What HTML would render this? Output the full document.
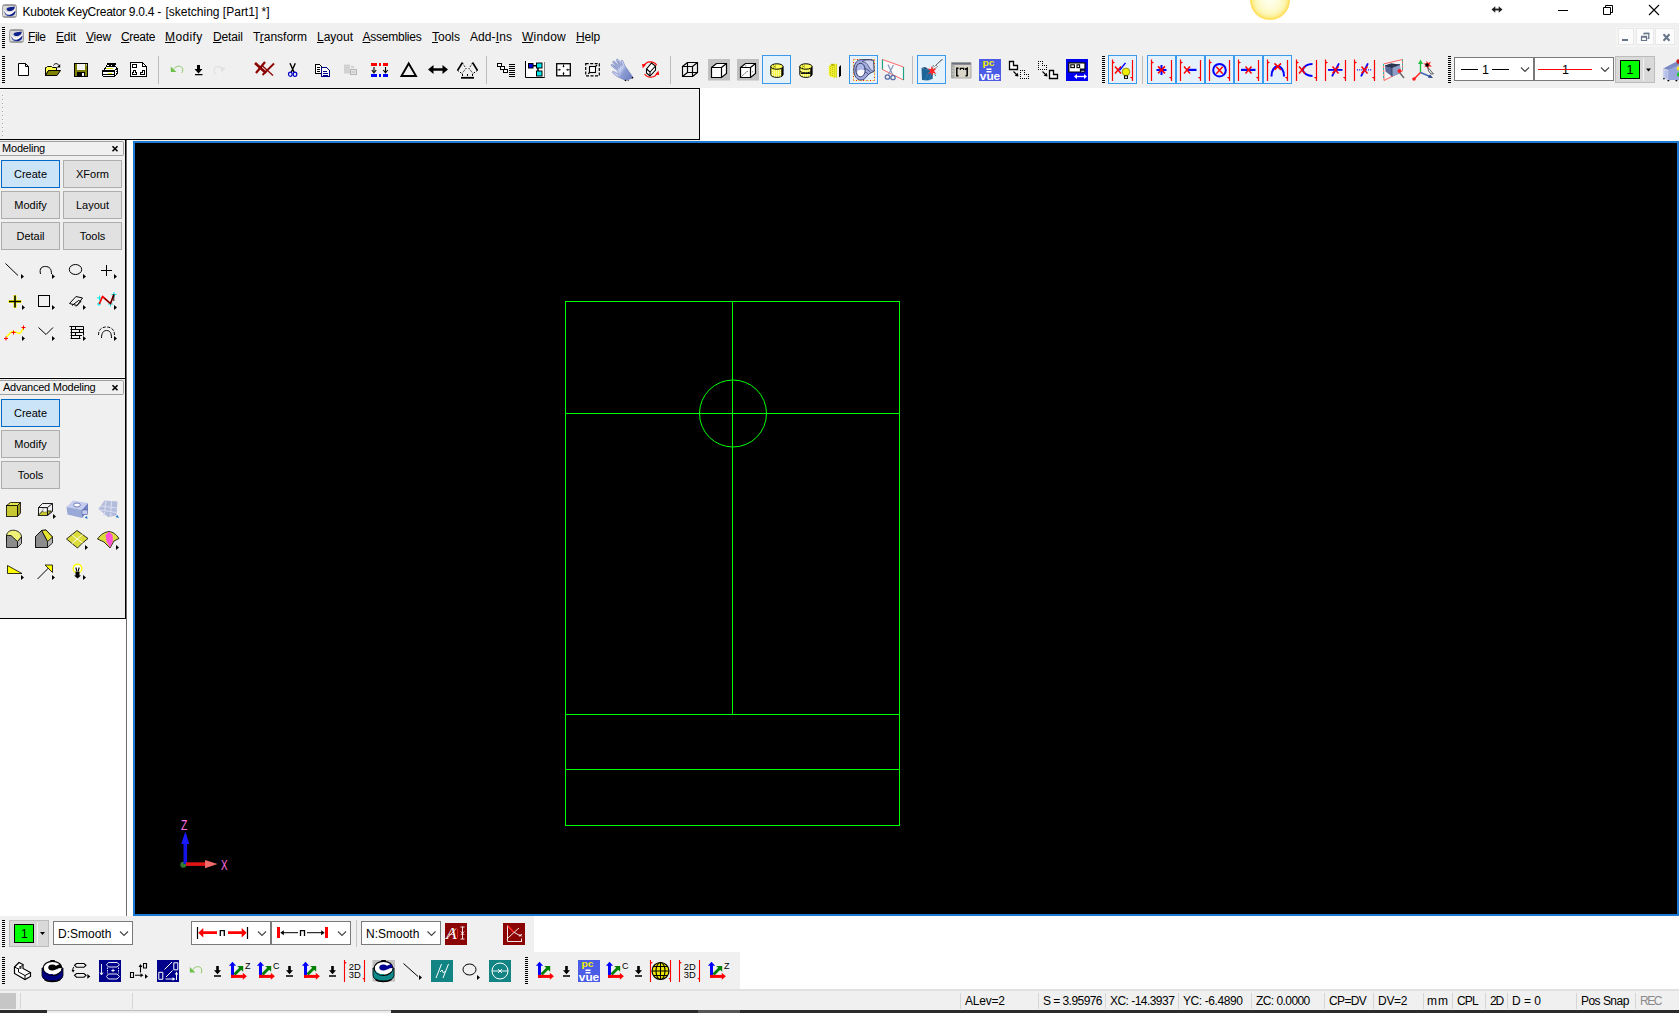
<!DOCTYPE html>
<html>
<head>
<meta charset="utf-8">
<title>Kubotek KeyCreator 9.0.4 - [sketching [Part1] *]</title>
<style>
html,body{margin:0;padding:0;}
body{width:1679px;height:1013px;overflow:hidden;background:#f0f0f0;position:relative;font-family:"Liberation Sans",sans-serif;font-size:12px;color:#000;}
div,span,svg{position:absolute;box-sizing:border-box;}
svg text{font-family:"Liberation Sans",sans-serif;}
.t{white-space:nowrap;line-height:1;}
u{text-decoration:underline;text-underline-offset:1px;}
#titlebar{left:0;top:0;width:1679px;height:23px;background:#fff;}
#menubar{left:0;top:23px;width:1679px;height:28px;background:#f0f0f0;}
#toolbar{left:0;top:51px;width:1679px;height:37px;background:#f0f0f0;}
#dock{left:0;top:88px;width:700px;height:52px;background:#f0f0f0;border-top:1px solid #000;border-right:1px solid #000;border-bottom:1px solid #000;}
#dockr{left:700px;top:88px;width:979px;height:53px;background:#fff;}
#leftpanel{left:0;top:140px;width:126px;height:479px;background:#f0f0f0;border-right:1px solid #000;border-bottom:1px solid #000;}
#leftwhite{left:0;top:619px;width:126px;height:297px;background:#fff;}
#psep{left:0;top:377px;width:125px;height:2px;background:#000;border-top:1px solid #fff;}
#vsep{left:126px;top:140px;width:7px;height:776px;background:#fff;border-left:1px solid #6d6d6d;}
#canvas{left:133px;top:141px;width:1546px;height:775px;background:#000;border:2px solid #1c7ad2;}
#bw1{left:534px;top:916px;width:1145px;height:36px;background:#fff;}
#bw2{left:740px;top:952px;width:939px;height:37px;background:#fff;}
#statusbar{left:0;top:989px;width:1679px;height:21px;background:#f0f0f0;border-top:2px solid #e1e1e1;}
#bottomstrip{left:0;top:1010px;width:1679px;height:3px;background:#2b2b2b;}
#dgrip i{position:absolute;left:0;width:1px;height:1px;background:#a8a8a8;box-shadow:1px 1px 0 #fff;}
.grip{width:3px;background:repeating-linear-gradient(to bottom,#000 0,#000 1px,transparent 1px,transparent 2px);}
.pbtn{background:#e1e1e1;border:1px solid #adadad;font-size:11px;text-align:center;width:59px;height:28px;line-height:26px;}
.pbtn.on{background:#cce4f7;border-color:#0068c6;}
.phead{left:0;width:124px;height:15px;border:1px solid #a0a0a0;border-left:none;border-radius:0 2px 2px 0;background:#f0f0f0;font-size:11px;}
.sb{top:4px;font-size:12px;color:#000;white-space:nowrap;line-height:1;}
.sbsep{top:2px;width:1px;height:16px;background:#d6d6d6;}
.combo{background:#fff;border:1px solid #7a7a7a;}
.hl{background:#e5f1fb;border:1px solid #3396e8;}
</style>
</head>
<body>
<div id="titlebar">
<svg style="left:1.5px;top:4px" width="15" height="14" viewBox="0 0 15 14"><rect x="0.500" y="0.500" width="14" height="13" rx="2.200" fill="#d8d8d8" stroke="#a2a2a2"/><path d="M1 1.500 H14 M1 12.600 H14" stroke="#8e8e8e" stroke-width="0.800"/><path d="M4.500 5.200 C5.500 2.600 9 3.600 12.700 2.600 C12.900 5.600 10.200 7.300 7.500 7.100 C5.800 7 4.800 6.300 4.500 5.200Z" fill="#10218c"/><path d="M2.200 5.800 C4 9.200 10 9.600 13 5.200 C13.400 8.800 9.200 11 6.300 10.400 C4.200 9.900 2.700 8.300 2.200 5.800Z" fill="#fff"/><path d="M13.400 6.600 C14 11.800 8.500 13.600 4.800 11 C8.500 11.300 11.400 9.600 13.400 6.600Z" fill="#10218c"/><path d="M2.400 7.800 C3.400 10.200 5.500 11.400 8 11.700 M3 9.800 C4 11 5 11.600 6.200 12" stroke="#2a3ca8" stroke-width="0.700" fill="none"/></svg>
<span class="t" id="ttl" style="left:22.500px;top:6px;font-size:12px;letter-spacing:-0.266px">Kubotek KeyCreator 9.0.4 - </span><span class="t" style="left:165.500px;top:6px;font-size:12px">[sketching [Part1] *]</span>
<div style="left:1250px;top:-20px;width:40px;height:40px;border-radius:50%;background:radial-gradient(circle closest-side at 50% 50%,#fffff2 0%,#fefcd6 45%,#fcf7b8 72%,#fcee90 86%,#ffdf58 95%,#ffe57a 100%)"></div>
<svg style="left:1491px;top:5px" width="12" height="9" viewBox="0 0 12 9"><path d="M2 4.500H10" stroke="#1e1e1e" stroke-width="1.800"/><path d="M0.500 4.500L4.300 1.200V7.800Z M11.500 4.500L7.700 1.200V7.800Z" fill="#1e1e1e"/></svg>
<svg style="left:1556px;top:3px" width="110" height="16" viewBox="0 0 110 16"><path d="M2 7.5H12" stroke="#000" stroke-width="1"/><path d="M47.500 4.500H54.500V11.500H47.500ZM49.500 4.500V2.500H56.500V9.500H54.500" fill="none" stroke="#000" stroke-width="1"/><path d="M93 2L103 12M103 2L93 12" stroke="#000" stroke-width="1.1"/></svg>
</div>
<div id="menubar">
<div class="grip" style="left:2px;top:4px;height:22px"></div>
<svg style="left:8.5px;top:6px" width="15" height="14" viewBox="0 0 15 14"><rect x="0.500" y="0.500" width="14" height="13" rx="2.200" fill="#d8d8d8" stroke="#a2a2a2"/><path d="M1 1.500 H14 M1 12.600 H14" stroke="#8e8e8e" stroke-width="0.800"/><path d="M4.500 5.200 C5.500 2.600 9 3.600 12.700 2.600 C12.900 5.600 10.200 7.300 7.500 7.100 C5.800 7 4.800 6.300 4.500 5.200Z" fill="#10218c"/><path d="M2.200 5.800 C4 9.200 10 9.600 13 5.200 C13.400 8.800 9.200 11 6.300 10.400 C4.200 9.900 2.700 8.300 2.200 5.800Z" fill="#fff"/><path d="M13.400 6.600 C14 11.800 8.500 13.600 4.800 11 C8.500 11.300 11.400 9.600 13.400 6.600Z" fill="#10218c"/><path d="M2.400 7.800 C3.400 10.200 5.500 11.400 8 11.700 M3 9.800 C4 11 5 11.600 6.200 12" stroke="#2a3ca8" stroke-width="0.700" fill="none"/></svg>
<span class="t" style="left:28px;top:8px;font-size:12px;letter-spacing:-0.46px"><u>F</u>ile</span>
<span class="t" style="left:56px;top:8px;font-size:12px;letter-spacing:-0.17px"><u>E</u>dit</span>
<span class="t" style="left:86px;top:8px;font-size:12px;letter-spacing:-0.2px"><u>V</u>iew</span>
<span class="t" style="left:121px;top:8px;font-size:12px;letter-spacing:-0.34px"><u>C</u>reate</span>
<span class="t" style="left:165px;top:8px;font-size:12px;letter-spacing:0.37px"><u>M</u>odify</span>
<span class="t" style="left:213px;top:8px;font-size:12px;letter-spacing:-0.15px"><u>D</u>etail</span>
<span class="t" style="left:253px;top:8px;font-size:12px;letter-spacing:-0.03px">T<u>r</u>ansform</span>
<span class="t" style="left:317px;top:8px;font-size:12px;letter-spacing:0px"><u>L</u>ayout</span>
<span class="t" style="left:362.5px;top:8px;font-size:12px;letter-spacing:-0.24px"><u>A</u>ssemblies</span>
<span class="t" style="left:432px;top:8px;font-size:12px;letter-spacing:0px"><u>T</u>ools</span>
<span class="t" style="left:470px;top:8px;font-size:12px;letter-spacing:0.09px">Add-<u>I</u>ns</span>
<span class="t" style="left:522px;top:8px;font-size:12px;letter-spacing:0.22px"><u>W</u>indow</span>
<span class="t" style="left:576px;top:8px;font-size:12px;letter-spacing:-0.17px"><u>H</u>elp</span>
<div style="left:1616px;top:4px;width:60px;height:20px;background:#f4f4f4"></div>
<div style="left:1618px;top:5px;width:16px;height:17px;background:#fcfcfc;border:1px solid #e8e8e8"></div>
<div style="left:1636px;top:5px;width:18px;height:17px;background:#fcfcfc;border:1px solid #e8e8e8"></div>
<div style="left:1655px;top:5px;width:20px;height:17px;background:#fcfcfc;border:1px solid #e8e8e8"></div>
<svg style="left:1617px;top:5px" width="58" height="18" viewBox="0 0 58 18"><path d="M5 12H11" stroke="#66748a" stroke-width="2"/><path d="M24.500 9H29.500V12.500H24.500Z" fill="none" stroke="#66748a" stroke-width="1.200"/><path d="M24 8.600H30" stroke="#66748a" stroke-width="1.600"/><path d="M27 6.500V5.600H31.800V10.300H30.500" fill="none" stroke="#66748a" stroke-width="1.200"/><path d="M27 5.300H32.300" stroke="#66748a" stroke-width="1.400"/><path d="M46.500 6.300L52.500 12.700M52.500 6.300L46.500 12.700" stroke="#66748a" stroke-width="2"/></svg>
</div>
<div id="toolbar"></div>
<div id="dock"><div style="left:0;top:0;width:699px;height:1px;background:#fbfbfb"></div><div id="dgrip" style="left:2px;top:0;width:3px;height:50px"><i style="top:6px"></i><i style="top:10px"></i><i style="top:14px"></i><i style="top:18px"></i><i style="top:22px"></i><i style="top:26px"></i><i style="top:30px"></i><i style="top:34px"></i><i style="top:38px"></i><i style="top:42px"></i><i style="top:46px"></i></div></div>
<div id="dockr"></div>
<div id="leftpanel">
<div class="phead" style="top:1px"><span class="t" style="left:2px;top:1px;font-size:11px;letter-spacing:-0.2px">Modeling</span></div>
<div class="pbtn on" style="left:1px;top:20px">Create</div><div class="pbtn" style="left:63px;top:20px">XForm</div>
<div class="pbtn" style="left:1px;top:51px">Modify</div><div class="pbtn" style="left:63px;top:51px">Layout</div>
<div class="pbtn" style="left:1px;top:82px">Detail</div><div class="pbtn" style="left:63px;top:82px">Tools</div>
<div class="phead" style="top:240px"><span class="t" style="left:3px;top:1px;font-size:11px;letter-spacing:-0.25px">Advanced Modeling</span></div>
<div class="pbtn on" style="left:1px;top:259px">Create</div>
<div class="pbtn" style="left:1px;top:290px">Modify</div>
<div class="pbtn" style="left:1px;top:321px">Tools</div>
</div>
<div id="psep"></div>
<div id="leftwhite"></div>
<div id="vsep"></div>
<div id="canvas">
<svg style="left:0;top:0" width="1542" height="771" viewBox="0 0 1542 771">
<g stroke="#00ff00" stroke-width="1" fill="none" shape-rendering="crispEdges"><rect x="430.5" y="158.5" width="334" height="524"/><line x1="597.5" y1="158" x2="597.5" y2="572"/><line x1="430" y1="270.5" x2="765" y2="270.5"/><line x1="430" y1="571.5" x2="765" y2="571.5"/><line x1="430" y1="626.5" x2="765" y2="626.5"/></g>
<circle cx="598" cy="270.5" r="33.5" fill="none" stroke="#00ff00" stroke-width="1"/>
<g transform="translate(-135,-143)"><circle cx="183.300" cy="864.800" r="3" fill="#2f7a2f"/><rect x="183.5" y="842" width="3.6" height="22" fill="#1414e6"/><path d="M185.3 831.5 L189.3 844 H181.3 Z" fill="#1a1aff"/><rect x="186" y="862.3" width="20" height="3.6" fill="#e01414"/><path d="M217.5 864.1 L205 860 V868.2 Z" fill="#f06a6a"/><text x="181" y="829.800" font-size="15.500" fill="#ff6ee0" textLength="6.400" lengthAdjust="spacingAndGlyphs">Z</text><text x="221" y="870" font-size="15.500" fill="#ff6ee0" textLength="6.600" lengthAdjust="spacingAndGlyphs">X</text></g>
</svg>
</div>
<div id="bw1"></div>
<div id="bw2"></div>
<div class="grip" style="left:2px;top:920px;height:27px"></div>
<div style="left:9px;top:920px;width:40px;height:27px;background:#d9d9d9;border:1px solid #bcbcbc"></div>
<div style="left:14px;top:924px;width:20px;height:19px;background:#00ff00;border:1px solid #000"></div>
<span class="t" style="left:21px;top:928px;font-size:12px;color:#000">1</span>
<div style="left:37px;top:922px;width:1px;height:23px;background:#f4f4f4"></div>
<div class="combo" style="left:53px;top:921px;width:80px;height:24px"><span class="t" style="left:4px;top:6px;font-size:12px">D:Smooth</span></div>
<div class="combo" style="left:191px;top:921px;width:80px;height:24px"></div>
<div class="combo" style="left:271px;top:921px;width:80px;height:24px"></div>
<div style="left:356px;top:920px;width:1px;height:27px;background:#c8c8c8"></div>
<div class="combo" style="left:361px;top:921px;width:80px;height:24px"><span class="t" style="left:4px;top:6px;font-size:12px">N:Smooth</span></div>
<div style="left:445px;top:923px;width:22px;height:22px;background:#8a0404"></div>
<div style="left:503px;top:923px;width:22px;height:22px;background:#8a0404"></div>
<div class="grip" style="left:2px;top:957px;height:27px"></div>
<div class="grip" style="left:525px;top:957px;height:27px"></div>
<div id="statusbar">
<div style="left:0;top:2px;width:16px;height:16px;background:#c6c6c6"></div>
<div class="sbsep" style="left:20px"></div><div class="sbsep" style="left:132px"></div><div class="sbsep" style="left:960px"></div><div class="sbsep" style="left:1038px"></div><div class="sbsep" style="left:1105px"></div><div class="sbsep" style="left:1178px"></div><div class="sbsep" style="left:1251px"></div><div class="sbsep" style="left:1324px"></div><div class="sbsep" style="left:1373px"></div><div class="sbsep" style="left:1423px"></div><div class="sbsep" style="left:1452px"></div><div class="sbsep" style="left:1485px"></div><div class="sbsep" style="left:1507px"></div><div class="sbsep" style="left:1576px"></div><div class="sbsep" style="left:1635px"></div>
<span class="sb" style="left:965px;letter-spacing:-0.224px">ALev=2</span><span class="sb" style="left:1043px;letter-spacing:-0.551px">S = 3.95976</span><span class="sb" style="left:1110px;letter-spacing:-0.535px">XC: -14.3937</span><span class="sb" style="left:1183px;letter-spacing:-0.413px">YC: -6.4890</span><span class="sb" style="left:1256px;letter-spacing:-0.567px">ZC: 0.0000</span><span class="sb" style="left:1329px;letter-spacing:-0.632px">CP=DV</span><span class="sb" style="left:1378px;letter-spacing:-0.29px">DV=2</span><span class="sb" style="left:1427px;letter-spacing:0.9px">mm</span><span class="sb" style="left:1457px;letter-spacing:-0.815px">CPL</span><span class="sb" style="left:1490px;letter-spacing:-1.222px">2D</span><span class="sb" style="left:1512px;letter-spacing:-0.043px">D = 0</span><span class="sb" style="left:1581px;letter-spacing:-0.531px">Pos Snap</span><span class="sb" style="left:1640px;letter-spacing:-1.448px;color:#8a8a8a">REC</span>
</div>
<div id="bottomstrip"><div style="left:47px;top:0;width:344px;height:3px;background:#ebebeb;border-top:1px solid #bdbdbd"></div><div style="left:698px;top:0;width:42px;height:3px;background:#565656"></div></div>
<svg id="ico" style="left:0;top:0" width="1679" height="1013" viewBox="0 0 1679 1013">
<g id="topicons">
<path d="M2 56.5 h3 M2 58.5 h3 M2 60.5 h3 M2 62.5 h3 M2 64.5 h3 M2 66.5 h3 M2 68.5 h3 M2 70.5 h3 M2 72.5 h3 M2 74.5 h3 M2 76.5 h3 M2 78.5 h3 M2 80.5 h3 M2 82.5 h3 " stroke="#000" stroke-width="1" shape-rendering="crispEdges"/>
<g transform="translate(18,63)"><path d="M0.500 0.500 H7.500 L10.500 3.500 V12.500 H0.500 Z" fill="#fff" stroke="#000"/><path d="M7.500 0.500 V3.500 H10.500" fill="none" stroke="#000"/></g>
<g transform="translate(45,63)"><path d="M0.500 12.500 V4.500 H1.500 L2.500 3.500 H6.500 L7.500 4.500 H11.500 V7.500 H3.500 Z" fill="#ffff50" stroke="#000" stroke-width="1"/><path d="M0.500 12.500 L3.500 7.500 H15.500 L12 12.500 Z" fill="#808000" stroke="#000" stroke-width="1"/><path d="M8.500 2.500 C9.500 0 12.500 0 14 2.500" stroke="#000" stroke-width="1" fill="none"/><path d="M15.200 1 V4.500 H11.800 Z" fill="#000"/></g>
<g transform="translate(74,63)"><rect x="0.500" y="0.500" width="13" height="13" fill="#808000" stroke="#000"/><rect x="3" y="1" width="8" height="6" fill="#f4f4f4"/><rect x="3" y="9" width="8" height="4.500" fill="#000"/><rect x="8" y="10" width="2" height="3" fill="#f4f4f4"/><rect x="12" y="1.500" width="1" height="1" fill="#fff"/></g>
<g transform="translate(102,63)"><g shape-rendering="crispEdges"><path d="M4.500 3.500 L5.500 0.500 H13.500 L12.500 3.500 Z" fill="#fff" stroke="#000"/><path d="M6 1.500 H13 M6.500 2.500 h2 M10 2.500 h2" stroke="#000"/><path d="M1.500 7.500 L4.500 3.500 H13.500 L15.500 6.500" fill="#fff" stroke="#000"/><path d="M4 5.500 H11" stroke="#e6e600"/><path d="M0.500 7.500 H12.500 V13.500 H1.500 L0.500 12.500 Z" fill="#fff" stroke="#000"/><path d="M12.500 7.500 L15.500 5.500 V10.500 L12.500 13.500" fill="#fff" stroke="#000"/><path d="M1 8.500 H12 M1 11.500 H12" stroke="#000"/><path d="M6 10 H10" stroke="#e6e600" stroke-width="1"/><path d="M13.500 8.500 h1 M13.500 10.500 h1 M14.500 7.500 h1 M14.500 9.500 h1" stroke="#000"/></g></g>
<g transform="translate(130,62)"><g shape-rendering="crispEdges"><path d="M0.500 0.500 H12.500 L16.500 4.500 V14.500 H0.500 Z" fill="#fff" stroke="#000" stroke-width="1"/><path d="M12.500 0.500 V4.500 H16.500" fill="none" stroke="#000" stroke-width="1"/><rect x="2.500" y="2.500" width="4" height="3" fill="none" stroke="#000"/><path d="M2.500 12.500 H6.500 V10.500 H5.500 V8.500 H3.500 V10.500 H2.500 Z" fill="none" stroke="#000"/><path d="M10.500 12.500 H14.500 V8.500 H12.500 V10.500 H10.500 Z" fill="none" stroke="#000"/></g></g>
<path d="M158.5 56 V84" stroke="#bdbdbd" stroke-width="1"/>
<g transform="translate(171,65.5)"><path d="M-0.200 6.600 V1.100 L5.400 6.600 Z" fill="#6cc04a"/><path d="M2.600 3.800 C4.500 1 8 -0.300 10.500 1.500 C12.300 3 12 5.500 11 7.300" stroke="#86c862" stroke-width="1" fill="none"/></g>
<path d="M197 65 h3 v4 h2.500 l-4 4.500 l-4 -4.500 h2.500 z M195 74 h7.500 v1.300 h-7.500z" fill="#000"/>
<g transform="translate(214,65.5)"><path d="M12 2.500 L6 1 L7.500 7 Z" fill="#e2e2e2"/><path d="M8.500 3.500 C5 -0.500 0 1 0 4.500 C0 6.500 1 8 2.500 9" stroke="#e2e2e2" stroke-width="1.300" fill="none"/></g>
<g transform="translate(254,61.5)"><path d="M1 1.500 L12 11.500" stroke="#8b0000" stroke-width="2.600"/><path d="M11 0.500 L2 11.500" stroke="#8b0000" stroke-width="2.200"/><path d="M8 4 L19 14" stroke="#8b0000" stroke-width="1.300"/><path d="M20 2 L8.500 13.500" stroke="#8b0000" stroke-width="1.800"/></g>
<g transform="translate(288,63)"><path d="M2 0.300 L6 9.300 M7.300 0.300 L3.300 9.300" stroke="#000" stroke-width="1.400" fill="none"/><ellipse cx="2.300" cy="11.200" rx="1.800" ry="2.100" fill="none" stroke="#0000c8" stroke-width="1.200"/><ellipse cx="7" cy="11.200" rx="1.800" ry="2.100" fill="none" stroke="#0000c8" stroke-width="1.200"/></g>
<g transform="translate(315,64)"><g shape-rendering="crispEdges"><path d="M0.500 0.500 H4.500 L6.500 2.500 V9.500 H0.500 Z" fill="#fff" stroke="#000"/><path d="M2 3.500 h3 M2 5.500 h3 M2 7.500 h3" stroke="#000"/><path d="M6.500 3.500 H11.500 L14.500 6.500 V12.500 H6.500 Z" fill="#fff" stroke="#00008b"/><path d="M8 7.500 h4 M8 9.500 h5 M8 11.500 h5" stroke="#00008b"/></g></g>
<g transform="translate(344,64)"><rect x="0" y="0.500" width="6" height="9" fill="#d2d2d2"/><path d="M7 2 l3 2 M10 2 l-3 2" stroke="#c4c4c4" stroke-width="0.800"/><rect x="6.500" y="5.500" width="6" height="5" fill="#e8e8e8" stroke="#b4b4b4"/><path d="M7.500 8 h4" stroke="#b4b4b4"/></g>
<path d="M371 63h6v3h-6z M379 63h2v3h-2z M383 63h5v3h-5z" fill="#ff0000" shape-rendering="crispEdges"/><path d="M371 74h6v3h-6z M379 74h2v3h-2z M383 74h5v3h-5z" fill="#0000ff" shape-rendering="crispEdges"/><path d="M374 67 V72 M385.500 67 V72" stroke="#000" stroke-width="1.100"/><path d="M371.800 70 L374 72.800 L376.200 70 M383.300 70 L385.500 72.800 L387.700 70" stroke="#000" stroke-width="1.100" fill="none"/>
<g transform="translate(400,62)"><path d="M8.700 1.500 L16 14 H1.500 Z" fill="none" stroke="#000" stroke-width="1.900"/></g>
<g transform="translate(428,65)"><path d="M0 4.500 L5.500 0 V3.200 H14.500 V0 L20 4.500 L14.500 9 V5.800 H5.500 V9 Z" fill="#000"/></g>
<g transform="translate(457,62)"><path d="M5.500 0.500 L0.500 8.500 M15.500 0.500 L20.500 8.500" stroke="#000" stroke-width="1.600"/><path d="M5.500 1 L9 6.500 L5 11.500 M0.500 8.500 L5 11.500 M15.500 1 L12 6.500 L16 11.500 M20.500 8.500 L16 11.500" stroke="#000" stroke-width="1" stroke-dasharray="1.500 1.500" fill="none"/><path d="M5.500 12 v2 M10.500 12 v2 M15.500 12 v2" stroke="#000"/><path d="M4 15.800 H17" stroke="#000" stroke-width="1.800"/></g>
<path d="M486.5 56 V84" stroke="#bdbdbd" stroke-width="1"/>
<g transform="translate(497,63)"><rect x="0.500" y="0.500" width="4" height="3" fill="#fff" stroke="#000"/><rect x="3.500" y="3.500" width="4" height="3" fill="#fff" stroke="#000"/><rect x="6.500" y="6.500" width="4" height="3" fill="#fff" stroke="#000"/><path d="M12 1.500 h6 M12 3.500 h6 M12 5.500 h6 M12 7.500 h6 M12 9.500 h6 M12 11.500 h6 M12 13.500 h6" stroke="#000" stroke-width="1"/></g>
<g transform="translate(525,61)"><rect x="0.500" y="0.500" width="19" height="16" fill="#fff" stroke="none"/><path d="M0.500 0 V16.500 H20" stroke="#000" stroke-width="1" fill="none"/><path d="M19.500 1 V16.500" stroke="#808080" stroke-width="1"/><path d="M8 4.700 H11.500 M13 7 V10" stroke="#000" stroke-width="1.500" fill="none"/><rect x="3.500" y="2.500" width="4.500" height="4.500" fill="#0000e0" stroke="#000"/><rect x="11.500" y="2" width="5.500" height="5" fill="#00e8e8" stroke="#000"/><rect x="11.500" y="10" width="5.500" height="5" fill="#00e8e8" stroke="#000"/></g>
<g transform="translate(556,63)"><rect x="0.700" y="0.700" width="13.600" height="12.100" fill="#fff" stroke="#000" stroke-width="1.300"/><path d="M7.500 1.500 V3.500 M7.500 12 V10 M1.500 6.800 H3.500 M13.500 6.800 H11.500" stroke="#000"/><path d="M6.300 3 h2.400 l-1.200 1.600z M6.300 10.500 h2.400 l-1.200 -1.600z M3.300 5.600 v2.400 l1.600 -1.200z M11.700 5.600 v2.400 l-1.600 -1.200z" fill="#000"/></g>
<g transform="translate(585,63)"><rect x="0.700" y="0.700" width="13.600" height="12.100" fill="none" stroke="#000" stroke-width="1.200" stroke-dasharray="3 1.500"/><rect x="4.500" y="3.500" width="6" height="6" fill="#fff" stroke="#000" stroke-width="1.100"/><path d="M3.200 10.800 l1.800 -1.800 M12 2 l-1.500 1.500" stroke="#000" stroke-width="1.200"/></g>
<defs><linearGradient id="hg" x1="0" y1="0.200" x2="1" y2="0.800"><stop offset="0" stop-color="#aab6e6"/><stop offset="0.450" stop-color="#c6cef0"/><stop offset="0.600" stop-color="#8c9cd4"/><stop offset="1" stop-color="#6e80c0"/></linearGradient></defs>
<g transform="translate(611,59)"><path d="M14.500 21.500 L6 17.500 L1.500 13.800 C0.800 12.800 2 11.800 3 12.500 L7.800 15.300 L6.300 11.800 L0.300 6.800 C-0.300 5.700 0.800 4.700 1.800 5.400 L7 9.300 L1.900 3.500 C1.300 2.400 2.500 1.400 3.400 2.300 L8.800 7.300 L5.400 1.400 C5 0.300 6.400 -0.400 7.100 0.400 L11.300 6.300 L9.900 2.400 C9.700 1.300 11.100 0.700 11.700 1.600 L14.200 7.200 C16.500 10.500 19 14 21.500 17.500 L22 19 Z" fill="url(#hg)" stroke="#6474b0" stroke-width="0.500"/><path d="M2 6.500 L7.500 11 M3.300 3.800 L9 9 M6.500 2 L10.500 7.500" stroke="#5c6aa4" stroke-width="0.600" fill="none"/><circle cx="14.500" cy="21.500" r="0.800" fill="#000"/><circle cx="21.500" cy="18.800" r="0.800" fill="#000"/><circle cx="17.300" cy="21.600" r="0.600" fill="#333"/></g>
<g transform="translate(642,60.5)"><path d="M1.800 5.500 A7.500 7.500 0 0 1 14.800 4.800 M15.400 12.500 A7.500 7.500 0 0 1 2.500 13.500" stroke="#ff0000" stroke-width="1.100" fill="none"/><path d="M0 3.500 L4 4 L0.800 7.800 Z M17.200 14.500 L13.200 14 L16.400 10.200 Z" fill="#ff0000"/><path d="M4.500 8.500 L9.500 2.500 L13.500 5.500 V9.500 L8 15.500 L4.500 12.500 Z" stroke="#000" stroke-width="1.100" fill="#fff"/><path d="M4.500 8.500 L8 11.500 L13.500 5.500 M8 11.500 V15.500" stroke="#000" stroke-width="1.100" fill="none"/></g>
<path d="M670.5 56 V84" stroke="#bdbdbd" stroke-width="1"/>
<g transform="translate(682,62)"><path d="M0.500 4.500 H10.500 V14.500 H0.500 Z M5.500 0.500 H15.500 V10.500 H5.500 Z M0.500 4.500 L5.500 0.500 M10.500 4.500 L15.500 0.500 M0.500 14.500 L5.500 10.500 M10.500 14.500 L15.500 10.500" stroke="#000" stroke-width="1.150" fill="none"/></g>
<rect x="708" y="59" width="22" height="21.500" fill="#c0c0c0"/>
<g transform="translate(711,63)"><path d="M0.500 4.500 L5.500 0.500 H15.500 V10.500 L10.500 14.500 H0.500 Z" fill="#fff" stroke="#000" stroke-width="1.200"/><path d="M0.500 4.500 H10.500 V14.500 M10.500 4.500 L15.500 0.500" stroke="#000" stroke-width="1.200" fill="none"/></g>
<rect x="737" y="59" width="22" height="21.500" fill="#c0c0c0"/>
<g transform="translate(740,63)"><path d="M0.500 4.500 L5.500 0.500 H15.500 V10.500 L10.500 14.500 H0.500 Z" fill="#fff" stroke="#000" stroke-width="1.200"/><path d="M0.500 4.500 H10.500 V14.500 M10.500 4.500 L15.500 0.500" stroke="#000" stroke-width="1.200" fill="none"/><path d="M1.500 13.500 L6.500 9" stroke="#000" stroke-width="0.700" stroke-dasharray="1.500 1"/><path d="M5.500 3 h0.800 M6.800 8.500 h0.800 M12.300 8.800 h0.800" stroke="#000" stroke-width="0.800"/></g>
<rect x="762.5" y="55.500" width="28" height="28" fill="#e5f1fb" stroke="#3a99ea" stroke-width="1"/>
<g transform="translate(770,63)"><path d="M0.800 3.500 V11.500 C0.800 15.300 13 15.300 13 11.500 V3.500 Z" fill="#f6f64a" stroke="#000" stroke-width="1"/><path d="M11.300 4.500 V13.800 L13.200 12 V3.500 Z" fill="#000"/><ellipse cx="6.900" cy="3.500" rx="6.100" ry="2.700" fill="#ffff5a" stroke="#000" stroke-width="1"/><path d="M3 2.500 l3 2 m0 -2 l-3 2" stroke="#8c8c00" stroke-width="0.800"/><path d="M2.500 7 V13 M4.500 7.500 V14 M6.500 7.500 V14 M8.500 7.500 V14 M10.500 7 V13.500" stroke="#fff" stroke-width="0.900" stroke-dasharray="1 1"/></g>
<g transform="translate(799,63)"><path d="M0.800 3.500 V11.500 C0.800 15.300 13 15.300 13 11.500 V3.500 Z" fill="#f6f64a" stroke="#000" stroke-width="1"/><path d="M11.300 4.500 V13.800 L13.200 12 V3.500 Z" fill="#000"/><ellipse cx="6.900" cy="3.500" rx="6.100" ry="2.700" fill="#ffff5a" stroke="#000" stroke-width="1"/><path d="M3 2.500 l3 2 m0 -2 l-3 2" stroke="#8c8c00" stroke-width="0.800"/><path d="M2.500 7 V13 M4.500 7.500 V14 M6.500 7.500 V14 M8.500 7.500 V14 M10.500 7 V13.500" stroke="#fff" stroke-width="0.900" stroke-dasharray="1 1"/><path d="M1 8.300 C3 10.300 10 10.300 13 8.300" stroke="#000" stroke-width="1" fill="none"/><path d="M2 10.500 H11.500" stroke="#000" stroke-width="0.900"/></g>
<g transform="translate(828,63)"><path d="M0.800 3.500 V12 C2 14.500 6 14.800 9 14.500 V1 C5 0.300 1.500 1.500 0.800 3.500 Z" fill="#f0f032"/><path d="M2.500 3 V13 M4.500 2 V14 M6.500 1.500 V14.500 M8.500 1.500 V14.500" stroke="#b4b400" stroke-width="0.800" stroke-dasharray="1 1"/><path d="M3 2.500 l3 -1.500 m-3 0 l3 1.500" stroke="#a0a000" stroke-width="0.700"/><path d="M11 4 L13 2 V12.500 L11 14.500 Z" fill="#000"/></g>
<rect x="849.5" y="55.500" width="28" height="28" fill="#e5f1fb" stroke="#3a99ea" stroke-width="1"/>
<g transform="translate(853,59)"><rect x="0.500" y="0.500" width="21" height="21" fill="none" stroke="#ff2020" stroke-width="1" stroke-dasharray="1 2.500"/><rect x="0.500" y="0.500" width="21" height="21" fill="none" stroke="#f0e000" stroke-width="1" stroke-dasharray="1 2.500" stroke-dashoffset="1.700"/><path d="M7 0.800 C12 0.300 19 0.500 20.500 1.500 L21 12.500 C18 13.500 15.500 15 14 17 C12.500 19.500 10.500 21 8 21 C3.500 21 0.800 16.500 0.800 11 C0.800 5.500 3.500 1.200 7 0.800 Z" fill="#a2ace0" stroke="#343c60" stroke-width="0.900"/><path d="M9 2.500 C13 2.500 15 6 16.500 9 C17.500 11 19.500 12 21 12.500 L20.500 1.500 C17 0.600 12 0.500 9 2.500 Z" fill="#d0d6f2" stroke="#343c60" stroke-width="0.700"/><ellipse cx="7.500" cy="11" rx="4.600" ry="6.800" fill="#aeb8e8" stroke="#343c60" stroke-width="1"/><path d="M4 13 C5 10.500 8.500 10 11.500 11.500 C11.500 14.500 9.500 17.300 7.500 17.300 C5.800 17.300 4.500 15.500 4 13 Z" fill="#fff"/><path d="M11.500 9.500 C14 10 16 11.500 17.500 13.500 M11.800 13 C13.500 13.500 15 14.500 15.800 15.800" stroke="#343c60" stroke-width="0.800" fill="none"/></g>
<g transform="translate(882,59)"><path d="M0.500 0.500 L21.500 8 V21 L0.500 10.500 Z" fill="#fafafa" stroke="#ff6a6a" stroke-width="1"/><path d="M0.500 0.500 V10.500 M21.500 8 V21" stroke="#20a080" stroke-width="1.200"/><path d="M6 5.500 L10.500 15.500 M11.500 6 L6.500 15.500" stroke="#8c9cc0" stroke-width="1.300"/><circle cx="5.500" cy="18" r="2.200" fill="none" stroke="#5a70a8" stroke-width="1.300"/><circle cx="11" cy="18.500" r="2.200" fill="none" stroke="#5a70a8" stroke-width="1.300"/></g>
<path d="M912.5 56 V84" stroke="#bdbdbd" stroke-width="1"/>
<rect x="917.5" y="55.500" width="28" height="28" fill="#e5f1fb" stroke="#3a99ea" stroke-width="1"/>
<g transform="translate(921,59)"><path d="M0.500 9 L9.500 11.500 L12.500 9 L11.500 20 L6 21.500 L1 21 Z" fill="#1e6496"/><path d="M0.500 9 L4 8 L9.500 11.500 Z" fill="#144878"/><path d="M4 21 L8 13 M8 21.500 L10 14" stroke="#2c86b8" stroke-width="0.800"/><path d="M21.500 0.500 L15 6 L16.500 7.500 L11.500 11 L12 6.500 L13.500 7.500 L20 1 Z" fill="#fff" stroke="#606060" stroke-width="0.700"/><path d="M9.500 12 l-3 -2.500 l3.500 0.500 l0.500 -3 l1.500 3 l3.500 -0.500 l-2.500 2.500 l2.500 3 l-3.500 -1 l-1 3 l-1 -3 l-3.500 1 z" fill="#ff2828"/><path d="M13.500 15 l1.500 2" stroke="#20a080" stroke-width="1"/></g>
<g transform="translate(951,62)"><rect x="0.500" y="0.500" width="19.500" height="15.500" fill="#d8d4c8"/><rect x="0.500" y="0.500" width="19.500" height="2.200" fill="#6a7084"/><rect x="0.500" y="2.700" width="3" height="13.300" fill="#a8a8a4"/><path d="M0.500 0.500 H20 V16 H0.500 Z" fill="none" stroke="#9a9a96" stroke-width="0.800"/><path d="M1 6 h2 M1 9 h2 M1 12 h2" stroke="#d0d0d0" stroke-width="0.800"/><path d="M7.500 6.200 h-1.700 v7.500 h1.700" stroke="#000" stroke-width="1.500" fill="none"/><path d="M9.300 8 V6.300 H12.700 V8" stroke="#000" stroke-width="1.200" fill="none"/><path d="M14 7.500 L16.200 6.200 V13.800 M14.500 13.800 H16.500" stroke="#000" stroke-width="1.500" fill="none"/></g>
<g transform="translate(979,59)"><rect x="0" y="0" width="22" height="22" fill="#4a5ce6"/><text x="3.500" y="6.700" font-size="9.500" font-weight="bold" fill="#f0f000" textLength="12" lengthAdjust="spacingAndGlyphs">pc</text><path d="M7.500 10.300 h5 M7.500 12.800 h5" stroke="#fff" stroke-width="1.400"/><text x="0.800" y="20.700" font-size="10.500" font-weight="bold" fill="#fff" textLength="20.400" lengthAdjust="spacingAndGlyphs">vue</text></g>
<g transform="translate(1009,61)"><path d="M0.500 0.500 H4.500 V4.500 H8.500 V8.500 H0.500 Z" fill="#fff" stroke="#000" stroke-width="1.300"/><path d="M4.500 10.500 L8 14" stroke="#000" stroke-width="1.100"/><path d="M9.500 15.500 l-3.800 -0.700 l3.100 -3.100 z" fill="#000"/><path d="M11 9h1v1h-1zM11 11h1v1h-1zM11 13h1v1h-1zM11 15h1v1h-1zM11 17h1v1h-1zM13 9h1v1h-1zM13 17h1v1h-1zM15 9h1v1h-1zM15 11h1v1h-1zM15 13h1v1h-1zM15 17h1v1h-1zM17 13h1v1h-1zM17 17h1v1h-1zM19 13h1v1h-1zM19 15h1v1h-1zM19 17h1v1h-1z" fill="#000" shape-rendering="crispEdges"/></g>
<g transform="translate(1038,61)"><path d="M0 0h1v1h-1zM0 2h1v1h-1zM0 4h1v1h-1zM0 6h1v1h-1zM0 8h1v1h-1zM2 0h1v1h-1zM2 8h1v1h-1zM4 0h1v1h-1zM4 2h1v1h-1zM4 4h1v1h-1zM4 8h1v1h-1zM6 4h1v1h-1zM6 8h1v1h-1zM8 4h1v1h-1zM8 6h1v1h-1zM8 8h1v1h-1z" fill="#000" shape-rendering="crispEdges"/><path d="M4.500 10.500 L8 14" stroke="#000" stroke-width="1.100"/><path d="M9.500 15.500 l-3.800 -0.700 l3.100 -3.100 z" fill="#000"/><path d="M11.500 9.500 H15.500 V13.500 H19.500 V17.500 H11.500 Z" fill="#fff" stroke="#000" stroke-width="1.300"/></g>
<g transform="translate(1066,59)"><rect x="0" y="0" width="22" height="22" fill="#0000f0"/><path d="M2.800 3.800 H19 V10 H14.500 V13 H2.800 Z" fill="#fff" stroke="#000" stroke-width="1.200"/><rect x="4.800" y="5.800" width="3.600" height="2.800" fill="#fff" stroke="#000" stroke-width="1.100"/><rect x="11" y="5.800" width="2.600" height="2.800" fill="#fff" stroke="#000" stroke-width="1.100"/><rect x="14.800" y="11.300" width="4" height="1.800" fill="#fff" stroke="#000" stroke-width="0.900"/><path d="M10 17.500 H19" stroke="#fff" stroke-width="1.300"/><path d="M8 17.500 l3 -2.500 v5z M21 17.500 l-3 -2.500 v5z" fill="#fff"/></g>
<path d="M1102 56.5 h3 M1102 58.5 h3 M1102 60.5 h3 M1102 62.5 h3 M1102 64.5 h3 M1102 66.5 h3 M1102 68.5 h3 M1102 70.5 h3 M1102 72.5 h3 M1102 74.5 h3 M1102 76.5 h3 M1102 78.5 h3 M1102 80.5 h3 M1102 82.5 h3 " stroke="#000" stroke-width="1" shape-rendering="crispEdges"/>
<rect x="1108.5" y="55.500" width="28" height="28" fill="#e5f1fb" stroke="#3a99ea" stroke-width="1"/>
<g transform="translate(1111.5,59.4)"><path d="M1 0 V21.500 M21 0.500 V21.500" stroke="#ff0000" stroke-width="1.200" fill="none"/><path d="M1 1.800 l2.600 1.300 l-2.600 1.300 z M21.500 20.300 l-3.200 -2.600 h3.200 z" fill="#ff0000"/><path d="M3.500 7 L9.500 14 M9.500 7 L3.500 14" stroke="#ff0000" stroke-width="1.500" fill="none"/><path d="M8 11 L14 3.500" stroke="#0000ff" stroke-width="1.500"/><circle cx="14.500" cy="12.500" r="3.800" fill="#f0f000" stroke="#808000" stroke-width="0.800"/><rect x="13" y="16.500" width="3" height="2.500" fill="#fff" stroke="#000" stroke-width="1"/></g>
<path d="M1142.5 56 V84" stroke="#bdbdbd" stroke-width="1"/>
<rect x="1147.5" y="55.500" width="28" height="28" fill="#e5f1fb" stroke="#3a99ea" stroke-width="1"/>
<rect x="1176.5" y="55.500" width="28" height="28" fill="#e5f1fb" stroke="#3a99ea" stroke-width="1"/>
<rect x="1205.5" y="55.500" width="28" height="28" fill="#e5f1fb" stroke="#3a99ea" stroke-width="1"/>
<rect x="1234.5" y="55.500" width="28" height="28" fill="#e5f1fb" stroke="#3a99ea" stroke-width="1"/>
<rect x="1263.5" y="55.500" width="28" height="28" fill="#e5f1fb" stroke="#3a99ea" stroke-width="1"/>
<g transform="translate(1150.5,59.4)"><path d="M1 0 V21.500 M21 0.500 V21.500" stroke="#ff0000" stroke-width="1.200" fill="none"/><path d="M1 1.800 l2.600 1.300 l-2.600 1.300 z M21.500 20.300 l-3.200 -2.600 h3.200 z" fill="#ff0000"/><path d="M11 5.500 V15.500 M6 10.500 H16" stroke="#0000ff" stroke-width="2" fill="none"/><path d="M7.500 7 L14.500 14 M14.500 7 L7.500 14" stroke="#ff0000" stroke-width="1.500" fill="none"/></g>
<g transform="translate(1179.5,59.4)"><path d="M1 0 V21.500 M21 0.500 V21.500" stroke="#ff0000" stroke-width="1.200" fill="none"/><path d="M1 1.800 l2.600 1.300 l-2.600 1.300 z M21.500 20.300 l-3.200 -2.600 h3.200 z" fill="#ff0000"/><path d="M8 10.500 H17" stroke="#0000ff" stroke-width="2.200"/><path d="M4.500 7 L10.500 14 M10.500 7 L4.500 14" stroke="#ff0000" stroke-width="1.500" fill="none"/></g>
<g transform="translate(1208.5,59.4)"><path d="M1 0 V21.500 M21 0.500 V21.500" stroke="#ff0000" stroke-width="1.200" fill="none"/><path d="M1 1.800 l2.600 1.300 l-2.600 1.300 z M21.500 20.300 l-3.200 -2.600 h3.200 z" fill="#ff0000"/><circle cx="11" cy="10.800" r="6.300" stroke="#0000ff" stroke-width="2" fill="none"/><path d="M7.800 7.300 L14.200 14.300 M14.200 7.300 L7.800 14.300" stroke="#ff0000" stroke-width="1.500" fill="none"/></g>
<g transform="translate(1237.5,59.4)"><path d="M1 0 V21.500 M21 0.500 V21.500" stroke="#ff0000" stroke-width="1.200" fill="none"/><path d="M1 1.800 l2.600 1.300 l-2.600 1.300 z M21.500 20.300 l-3.200 -2.600 h3.200 z" fill="#ff0000"/><path d="M3.500 10.500 H18" stroke="#0000ff" stroke-width="2.200"/><path d="M8 7 L14 14 M14 7 L8 14" stroke="#ff0000" stroke-width="1.500" fill="none"/></g>
<g transform="translate(1266.5,59.4)"><path d="M1 0 V21.500 M21 0.500 V21.500" stroke="#ff0000" stroke-width="1.200" fill="none"/><path d="M1 1.800 l2.600 1.300 l-2.600 1.300 z M21.500 20.300 l-3.200 -2.600 h3.200 z" fill="#ff0000"/><path d="M5 17 C5 3.500 17.500 3.500 17.500 17" stroke="#0000ff" stroke-width="2" fill="none"/><path d="M8 4 L14.500 10.500 M14.500 4 L8 10.500" stroke="#ff0000" stroke-width="1.500" fill="none"/></g>
<g transform="translate(1295.5,59.4)"><path d="M1 0 V21.500 M21 0.500 V21.500" stroke="#ff0000" stroke-width="1.200" fill="none"/><path d="M1 1.800 l2.600 1.300 l-2.600 1.300 z M21.500 20.300 l-3.200 -2.600 h3.200 z" fill="#ff0000"/><path d="M17 4.500 C11 4.500 8 8 7 10.500 C8 13 11 16.500 17 16.500" stroke="#0000ff" stroke-width="2" fill="none"/><path d="M3.500 7 L9.500 14 M9.500 7 L3.500 14" stroke="#ff0000" stroke-width="1.500" fill="none"/></g>
<g transform="translate(1324.5,59.4)"><path d="M1 0 V21.500 M21 0.500 V21.500" stroke="#ff0000" stroke-width="1.200" fill="none"/><path d="M1 1.800 l2.600 1.300 l-2.600 1.300 z M21.500 20.300 l-3.200 -2.600 h3.200 z" fill="#ff0000"/><path d="M3.500 10.500 H18" stroke="#0000ff" stroke-width="1.800"/><path d="M14.500 4 L7.500 17" stroke="#0000ff" stroke-width="1.800"/><path d="M8 7 L14 14 M14 7 L8 14" stroke="#ff0000" stroke-width="1.500" fill="none"/></g>
<g transform="translate(1353.5,59.4)"><path d="M1 0 V21.500 M21 0.500 V21.500" stroke="#ff0000" stroke-width="1.200" fill="none"/><path d="M1 1.800 l2.600 1.300 l-2.600 1.300 z M21.500 20.300 l-3.200 -2.600 h3.200 z" fill="#ff0000"/><path d="M3.500 10.500 H18" stroke="#0000ff" stroke-width="1.200" stroke-dasharray="1 1.200"/><path d="M14.500 4 L7.500 17" stroke="#0000ff" stroke-width="1.800"/><path d="M8 7 L14 14 M14 7 L8 14" stroke="#ff0000" stroke-width="1.500" fill="none"/></g>
<g transform="translate(1383,59)"><path d="M0.500 5 L19.500 0.500 V12 L1 21.500 Z" fill="#f4f4f4" stroke="#ff5050" stroke-width="0.900"/><path d="M0.500 5 V21 M19.500 0.500 V12" stroke="#20c0a0" stroke-width="1" stroke-dasharray="2 2"/><path d="M2 6.500 L8 4.500 L17 5.500 L17.500 14 L9 17.500 L2.500 12.500 Z" fill="#5a6898"/><path d="M2 6.500 L8 4.500 L17 5.500 L9 8.500 Z" fill="#2c3450"/><path d="M9 8.500 L17 5.500 L17.500 14 L9 17.500 Z" fill="#8e9cc8"/><path d="M2 6.500 L9 8.500 V17.500 M9 8.500 L17 5.500" stroke="#20283c" stroke-width="0.700" fill="none"/><circle cx="16.500" cy="12" r="2" fill="#ff1e1e"/><path d="M17 14 L21 19" stroke="#707070" stroke-width="1.600"/></g>
<g transform="translate(1412,59)"><path d="M8.500 13.500 V4" stroke="#20c040" stroke-width="1.400"/><path d="M8.500 0.500 L11 5 H6 Z" fill="#20c040"/><path d="M8.500 13.500 L2.500 19.500" stroke="#ff2020" stroke-width="1.400"/><circle cx="2" cy="20" r="1.800" fill="#ff2020"/><path d="M8.500 13.500 L18 17.500" stroke="#3c64b4" stroke-width="1.400"/><path d="M21 19 L16 18.800 L18 15.500 Z" fill="#28468c"/><path d="M14.500 6.500 l-3.500 -2 l3.500 0 l0 -3 l1.500 2.500 l3 -1.500 l-1.500 3 l2.500 2 l-3.500 0 l-0.500 3 l-1.500 -3 l-3 1 z" fill="#ff1e1e"/><circle cx="15" cy="6" r="1.800" fill="#000"/><path d="M16 8.500 L21.500 15 L19 15 L16.500 12 Z" fill="#e8e8e8" stroke="#404040" stroke-width="0.800"/></g>
<path d="M1448 56.5 h3 M1448 58.5 h3 M1448 60.5 h3 M1448 62.5 h3 M1448 64.5 h3 M1448 66.5 h3 M1448 68.5 h3 M1448 70.5 h3 M1448 72.5 h3 M1448 74.5 h3 M1448 76.5 h3 M1448 78.5 h3 M1448 80.5 h3 M1448 82.5 h3 " stroke="#000" stroke-width="1" shape-rendering="crispEdges"/>
<rect x="1454.500" y="57.500" width="79" height="23" fill="#fff" stroke="#7a7a7a"/>
<rect x="1534.500" y="57.500" width="79" height="23" fill="#fff" stroke="#7a7a7a"/>
<path d="M1461 69.500 H1478 M1492 69.500 H1509" stroke="#000" stroke-width="1"/><text x="1482" y="74" font-size="12.500" fill="#000">1</text>
<text x="1562" y="74" font-size="12.500" fill="#000">1</text><path d="M1538 69.500 H1592" stroke="#ff0000" stroke-width="1"/>
<path d="M1521 67.500 l4 4 l4 -4 M1601 67.500 l4 4 l4 -4" stroke="#444" stroke-width="1.100" fill="none"/>
<rect x="1615.500" y="56.500" width="39" height="26" fill="#d9d9d9" stroke="#bcbcbc"/>
<rect x="1620.500" y="60.500" width="19" height="18" fill="#00ff00" stroke="#000"/><text x="1626.500" y="74" font-size="12.500" fill="#000">1</text>
<path d="M1643.500 58 V81" stroke="#f4f4f4"/><path d="M1646 68.500 h5 l-2.500 3z" fill="#000"/>
<g transform="translate(1663,59)"><path d="M0.500 9.500 L12 3.500 H16 V21 H5.500 L0.500 19.500 Z" fill="#8e9cd2"/><path d="M0.500 9.500 L12 3.500 H16 V6 L5.500 11 Z" fill="#7c8ac4"/><path d="M0.500 9.500 L5.500 11 V21 L0.500 19.500 Z" fill="#d4daf0"/><path d="M1.500 11 L4.800 12 V20 L1.500 19 Z" fill="#b4bee6"/><path d="M5.500 11 L16 6 V21 H5.500 Z" fill="#98a6da"/><circle cx="15.500" cy="2.500" r="2.200" fill="#c01818"/><circle cx="16" cy="9.500" r="2.200" fill="#f0e020"/><circle cx="16" cy="15.500" r="2.200" fill="#20c830"/><path d="M0 19.300 h1.800 v1 h-1.800z M4.500 21 h1.800 v1.200 h-1.800z M12.500 21 h1.800 v1.200 h-1.800z" fill="#000"/></g>
</g>
<g id="lefticons">
<path d="M112.5 146.3 l5 5 m0 -5 l-5 5" stroke="#000" stroke-width="1.6" fill="none"/>
<path d="M112.5 385.3 l5 5 m0 -5 l-5 5" stroke="#000" stroke-width="1.6" fill="none"/>
<path d="M5.5 263.5 L18 275.5" stroke="#000" stroke-width="1" fill="none"/><path d="M21 274 l3 2.5 l-3 2.5z" fill="#000"/><path d="M40.5 274 C39 268 42 266.5 45.5 266.5 C49.5 266.5 51.5 269 51.5 274" stroke="#000" stroke-width="1" fill="none"/><path d="M52 274 l3 2.5 l-3 2.5z" fill="#000"/><ellipse cx="75.5" cy="269.5" rx="6.2" ry="5" stroke="#000" stroke-width="1" fill="none"/><path d="M83 274 l3 2.5 l-3 2.5z" fill="#000"/><path d="M101 270.5 H112 M106.5 265 V276" stroke="#000" stroke-width="1" fill="none"/><path d="M114 274 l3 2.5 l-3 2.5z" fill="#000"/><path d="M8.5 301.5 H21.5 M15 295 V308" stroke="#ffff00" stroke-width="3" fill="none"/><path d="M9 301.5 H21 M15 295.5 V307.5" stroke="#000" stroke-width="1.6" fill="none"/><path d="M22 305 l3 2.5 l-3 2.5z" fill="#000"/><rect x="38.5" y="295.5" width="11" height="11" stroke="#000" stroke-width="1" fill="none"/><path d="M52 305 l3 2.5 l-3 2.5z" fill="#000"/><path d="M69.5 303.5 L76 296.5 L82.5 298 L77 305.5 Z M72 305.5 L78.5 300.5 L81 301.5 L76 306.5" stroke="#000" stroke-width="1" fill="none"/><path d="M83 305 l3 2.5 l-3 2.5z" fill="#000"/><path d="M97 298 h5 m-2.500 -2.500 v5 M108 304 h5 m-2.500 -2.500 v5 M111.500 294.500 h5 m-2.500 -2.500 v5 M97 304 h4 m-2 -2 v4" stroke="#00e8e8" stroke-width="1" fill="none"/><path d="M99.300 304 L102.500 296.500 L110.500 303.700 L113.800 294.500" stroke="#ff0000" stroke-width="1.700" fill="none" stroke-linejoin="round"/><path d="M104.500 298.300 L110.500 303.700 L113.800 294.500 V301" stroke="#000" stroke-width="0.900" fill="none"/><path d="M114 305 l3 2.5 l-3 2.5z" fill="#000"/><path d="M6 337 C9 336 10 331 13.5 331.5 C17 332 18 334 20 333 C22 332 22 329 24 328" stroke="#ffff00" stroke-width="1.6" fill="none"/><path d="M4 338.5 h4 m-2 -2 v4 M11.5 332.500 h4 m-2 -2 v4 M21.500 327.500 h4 m-2 -2 v4" stroke="#ff0000" stroke-width="1" fill="none"/><path d="M22 336 l3 2.5 l-3 2.5z" fill="#000"/><path d="M38.500 327.500 L46 334.500 L53 327.500" stroke="#000" stroke-width="1" fill="none"/><path d="M52 336 l3 2.5 l-3 2.5z" fill="#000"/><path d="M69.500 326.500 H83.500 M70.500 329.500 H83.500 M70.500 332.500 H83.500 M70.500 335.500 H82 M70.500 338.500 H80.500 M71.500 326.500 V338.500 M75.500 326.500 V329.500 M79.500 329.500 V332.500 M75.500 332.500 V335.500 M79.500 335.500 V338.500 M83.500 326.500 V335.500" stroke="#000" stroke-width="1" fill="none"/><path d="M83 336 l3 2.5 l-3 2.5z" fill="#000"/><path d="M98.500 335 C98.500 329.500 102 327 106.500 327 C111.500 327 114.500 330 114.500 335" stroke="#000" stroke-width="1" stroke-dasharray="3 1.5" fill="none"/><path d="M101.500 338 C101.500 333 103.500 330.500 106.500 330.500 C110 330.500 111.500 333 111.500 338" stroke="#000" stroke-width="1" fill="none"/><path d="M114 336 l3 2.5 l-3 2.5z" fill="#000"/>
<path d="M6.500 505.500 L10.500 502.500 H20.500 L17.500 505.500 Z" fill="#e6e646" stroke="#000" stroke-width="0.8"/><rect x="6.500" y="505.500" width="11" height="11" fill="#c8c832" stroke="#000" stroke-width="0.8"/><path d="M17.500 505.500 L20.500 502.500 V513 L17.500 516.500 Z" fill="#a0a020" stroke="#000" stroke-width="0.8"/><path d="M38 515.500 L42.500 511 H51.500 L47 515.500 Z" fill="#c8c832" stroke="#000" stroke-width="0.8"/><path d="M38.500 507.500 H47.500 V515.500 M38.500 507.500 V515 M38.500 507.500 L42.500 503.500 H52.500 L47.500 507.500 M52.500 503.500 V511.500 L47.500 515.500" stroke="#000" stroke-width="0.9" fill="none"/><rect x="43" y="508" width="4" height="4" fill="#fff" stroke="#555" stroke-width="0.5"/><path d="M53 514 l3 2.5 l-3 2.5z" fill="#000"/><path d="M66.500 507 L73 500.500 L88 503 L82 510 Z" fill="#c4cdf0"/><path d="M66.500 507 L82 510 V518 L67.500 514.500 Z" fill="#9aa8d8"/><path d="M82 510 L88 503 V510.500 L82 518 Z" fill="#7080c0"/><ellipse cx="77" cy="505" rx="3.4" ry="2" fill="#fff" stroke="#5060a0" stroke-width="0.8"/><rect x="82" y="510" width="5.500" height="4.500" fill="#c4cdf0" stroke="#5060a0" stroke-width="0.6"/><path d="M84.500 517.500 l3 1.500 l-0.500 -3z" fill="#1e78c8"/><path d="M98.500 509 L104.500 500.500 L117.500 501.500 L116.500 515.500 L108 517 Z" fill="#b4bcdc"/><path d="M101 506 L117 508 M100 510 L116.500 512.500 M106 501 L104 516 M111.500 501 L110.500 516.500" stroke="#d8dcf0" stroke-width="1.2" fill="none"/><path d="M115.500 517 l3.500 1 l-1.500 -3z" fill="#1e78c8"/><path d="M6.500 535.500 C7 531 12 529.500 15.500 530.500 C19.500 531.500 21.500 534.500 21.500 537 L17.500 541.500 L6.500 541.500 Z" fill="#f0f078" stroke="#000" stroke-width="0.8"/><path d="M6.500 535.500 H11 L17.500 541.500 V547.500 H6.500 Z" fill="#8c8c8c" stroke="#000" stroke-width="0.8"/><path d="M17.500 541.500 L21.500 537 V543.500 L17.500 547.500 Z" fill="#b4b4b4" stroke="#000" stroke-width="0.8"/><path d="M35.500 536.500 L41.500 530.500 L46 530 L52.500 537 V543 L47.500 547.500 H35.500 Z" fill="#b4b4b4" stroke="#000" stroke-width="0.8"/><path d="M41.500 530.500 L46 530 L52.500 537 L47.500 541.500 Z" fill="#e6e632" stroke="#000" stroke-width="0.8"/><path d="M35.500 536.500 L41.500 530.500 L47.500 541.500 V547.500 H35.500 Z" fill="#8c8c8c" stroke="#000" stroke-width="0.8"/><path d="M66.500 539 L77 530.500 L88 538.500 L82.500 543 L77.500 548 L72 543.500 Z" fill="#dcdc3c" stroke="#000" stroke-width="0.8"/><path d="M72 535 L82.500 543 M82.500 534.500 L72 543.500" stroke="#fff" stroke-width="0.9"/><path d="M85 545 l3 2.5 l-3 2.5z" fill="#000"/><path d="M97.500 539 C101 534 105 532 109 531.500 C113 532 116 534 119 538.500 L114 541 L110 548 L104 542 Z" fill="#dcdc3c" stroke="#000" stroke-width="0.8"/><path d="M105.500 535 L109 531.500 L112.500 535 L113 541 L110 547.500 L106.500 541.500 Z" fill="#ff50d8"/><path d="M116 545 l3 2.5 l-3 2.5z" fill="#000"/><path d="M7.500 565.500 L22 573.500 H7.500 Z" fill="#ffff00" stroke="#000" stroke-width="0.8"/><path d="M21 575 l3 2.5 l-3 2.5z" fill="#000"/><path d="M37.500 579 L49.500 567" stroke="#000" stroke-width="1"/><path d="M45 565 H52.500 V572.500 Z" fill="#ffff00" stroke="#000" stroke-width="0.8"/><path d="M52 575 l3 2.5 l-3 2.5z" fill="#000"/><circle cx="77.500" cy="568.500" r="4.300" fill="#fff" stroke="#ffff00" stroke-width="1.400"/><path d="M75.800 567.500 l1 3.500 m1.400 0 l1 -3.500" stroke="#000" stroke-width="1.100" fill="none"/><path d="M75.500 571.500 h4 v4 h1.500 l-3.500 3 l-3.500 -3 h1.500z" fill="#000"/><path d="M83 575 l3 2.5 l-3 2.5z" fill="#000"/>
</g>
<g id="bottomicons">
<path d="M40 932 h5 l-2.500 3z" fill="#000"/><path d="M120 931.5 l4 4 l4 -4" stroke="#444" stroke-width="1.100" fill="none"/><path d="M258 931.5 l4 4 l4 -4" stroke="#444" stroke-width="1.100" fill="none"/><path d="M338 931.5 l4 4 l4 -4" stroke="#444" stroke-width="1.100" fill="none"/><path d="M427.5 931.5 l4 4 l4 -4" stroke="#444" stroke-width="1.100" fill="none"/><path d="M197.500 927 V939 M247.500 927 V939" stroke="#000" stroke-width="1.200"/><path d="M202 932.700 H217 M228 932.700 H243" stroke="#ff0000" stroke-width="2.800"/><path d="M198.300 932.700 l5 -4.700 v9.400z M246.700 932.700 l-5 -4.700 v9.400z" fill="#ff0000"/><path d="M220.300 936 v-5.300 h4 v5.300" stroke="#000" stroke-width="1.300" fill="none"/><path d="M278.500 927 V938 M326.500 927 V938" stroke="#ff0000" stroke-width="3"/><path d="M282 932.700 H298 M307 932.700 H323" stroke="#000" stroke-width="1"/><path d="M280.300 932.700 l3.500 -2.500 v5z M324.700 932.700 l-3.500 -2.500 v5z" fill="#000"/><path d="M300.500 936 v-5.300 h4 v5.300" stroke="#000" stroke-width="1.300" fill="none"/><text x="446" y="939" font-size="17.500" font-style="italic" style="font-family:'Liberation Serif',serif" fill="#fff">A</text><path d="M446.500 939 L456 928.500" stroke="#fff" stroke-width="0.900"/><path d="M462.500 927 V939 M460.500 927 h4 M460.500 939 h4 M460.800 931.500 l3.400 3.400 m0 -3.400 l-3.400 3.400" stroke="#fff" stroke-width="0.900" fill="none"/><path d="M457.500 929 V938" stroke="#ff3030" stroke-width="0.800"/><path d="M507.500 925.500 V941.500 H522 M521.500 938.500 V941.500 M513.500 932 L520.500 936 M506.800 939 L519 928" stroke="#fff" stroke-width="0.900" fill="none"/><path d="M508 926 L513.500 932" stroke="#ff2828" stroke-width="1.700"/><path d="M519.500 934 l2.500 2.500 m0 -2.500 l-2.500 2.500" stroke="#fff" stroke-width="0.800"/>
<path d="M14.500 967 L19 962.500 L23 964.500 L23 968.500 L30.500 972.500 L30.500 976.500 L25 979.500 L14.500 973.500 Z" fill="#fff" stroke="#000" stroke-width="1.200"/><path d="M14.500 967 L18.500 969 L18.500 972 L25 975.500 L30.500 972.500 M25 975.500 V979.500 M18.500 969 L23 964.500 M19.500 966.500 C21 966 21.500 967.500 20.500 969" stroke="#000" stroke-width="1" fill="none"/><g transform="translate(41,960)"><path d="M1 8 V15.500 C1 23 22 23 22 15.500 V8 Z" fill="#000080" stroke="#000" stroke-width="0.800"/><path d="M3.500 19.500 C7 22.300 15.500 22.300 19.500 19.500" stroke="#000" stroke-width="1.500" fill="none"/><ellipse cx="11.500" cy="8.300" rx="9.300" ry="7" fill="#fff" stroke="#000" stroke-width="1.200"/><rect x="9.300" y="0" width="4.500" height="1.300" fill="#000"/><ellipse cx="11.300" cy="7.500" rx="4" ry="3" fill="#000"/><path d="M11 7.500 L19.500 3.800 L20.800 8.500 L14 9.500 Z" fill="#000"/><path d="M16.500 8.500 L20.600 8 L19.500 11.500 Z" fill="#fff"/><path d="M4 12 C6.500 14.500 9 15 12 14.500" stroke="#000080" stroke-width="1" fill="none"/></g><path d="M76.500 963.500 H84 L86 965.300 L84 967.200 H76.500 L74.500 965.300 Z M76.500 973.500 H84 L86 975.300 L84 977.200 H76.500 L74.500 975.300 Z" stroke="#000" stroke-width="1.100" fill="none"/><path d="M74 967 C72.500 968 72.800 970 73 971" stroke="#000" stroke-width="1" fill="none"/><path d="M71.500 970 h3.200 l-1.600 2.500z" fill="#000"/><path d="M87.300 974 l3 2.400 l-3 2.400z" fill="#000"/><rect x="99" y="960" width="22" height="22" fill="#00008b"/><path d="M108.500 962.500 H117 L119.500 964.700 L117 967 H108.500 L106.500 964.700 Z M108.500 974 H117 L119.500 976.500 L117 979 H108.500 L106.500 976.500 Z" stroke="#fff" stroke-width="0.900" fill="none"/><path d="M107.500 967.500 V973.500 M118.500 967.500 V973.500" stroke="#fff" stroke-width="0.900" stroke-dasharray="1.500 1"/><path d="M101.500 964 V974.500 M100 972.500 l1.500 2.500 l1.500 -2.500 M113 968.800 v3.400 M111.300 970.500 h3.400" stroke="#fff" stroke-width="0.900" fill="none"/><path d="M130.500 972.500 h3 v5 h-3z M143.500 963.500 h3 v4.500 h-3z" stroke="#000" stroke-width="1.100" fill="none"/><path d="M135 975.300 h6.500 M140.500 972.500 V966" stroke="#000" stroke-width="1.100"/><path d="M140.500 973.300 l3 2 l-3 2z M138.500 967 l2 -3 l2 3z M145 974 l3 2.400 l-3 2.400z" fill="#000"/><rect x="157" y="960" width="22" height="22" fill="#00008b"/><path d="M158.800 972.300 h4 v7 h-4z M173.800 962.800 h4 v7 h-4z" stroke="#fff" stroke-width="1" fill="none"/><path d="M164.500 969.500 L172 962 M166 977 L172.500 970.500 M165.500 979 H173 M176.500 980 V973.500" stroke="#fff" stroke-width="1" fill="none"/><path d="M172.500 977.300 l3 1.700 l-3 1.700z M174.800 974.500 l1.700 -3 l1.700 3z" fill="#fff"/><g transform="translate(190,966)"><path d="M-0.200 6.600 V1.100 L5.400 6.600 Z" fill="#6cc04a"/><path d="M2.600 3.800 C4.500 1 8 -0.300 10.500 1.500 C12.300 3 12 5.500 11 7.300" stroke="#86c862" stroke-width="1" fill="none"/></g><path d="M216.2 966 h2.600 v4.300 h2.200 l-3.500 4 l-3.500 -4 h2.200 z M214 975.2 h7 v1.600 h-7z" fill="#000"/><g transform="translate(230,962)"><path d="M4.500 12.500 L10.500 6.500" stroke="#008000" stroke-width="2.800"/><path d="M7.300 4 H13.200 V9.800 Z" fill="#008000"/><path d="M2.500 15.800 V3" stroke="#0000ff" stroke-width="3"/><path d="M2.500 -0.300 L6.100 3.800 H-1.100 Z" fill="#0000ff"/><path d="M1 14.400 H13.500" stroke="#ff0000" stroke-width="3"/><path d="M16.900 14.300 L12.800 10.800 V17.800 Z" fill="#ff0000"/><text x="15" y="6.600" font-size="9" fill="#000">Z</text></g><g transform="translate(258,962)"><path d="M4.500 12.500 L10.500 6.500" stroke="#008000" stroke-width="2.800"/><path d="M7.300 4 H13.200 V9.800 Z" fill="#008000"/><path d="M2.500 15.800 V3" stroke="#0000ff" stroke-width="3"/><path d="M2.500 -0.300 L6.100 3.800 H-1.100 Z" fill="#0000ff"/><path d="M1 14.400 H13.500" stroke="#ff0000" stroke-width="3"/><path d="M16.900 14.300 L12.800 10.800 V17.800 Z" fill="#ff0000"/><text x="15" y="6.600" font-size="9" fill="#000">C</text></g><path d="M288.2 966 h2.600 v4.300 h2.200 l-3.500 4 l-3.500 -4 h2.200 z M286 975.2 h7 v1.600 h-7z" fill="#000"/><g transform="translate(303,962)"><path d="M4.500 12.500 L10.500 6.500" stroke="#008000" stroke-width="2.800"/><path d="M7.300 4 H13.200 V9.800 Z" fill="#008000"/><path d="M2.500 15.800 V3" stroke="#0000ff" stroke-width="3"/><path d="M2.500 -0.300 L6.100 3.800 H-1.100 Z" fill="#0000ff"/><path d="M1 14.400 H13.500" stroke="#ff0000" stroke-width="3"/><path d="M16.900 14.300 L12.800 10.800 V17.800 Z" fill="#ff0000"/></g><path d="M331.2 966 h2.600 v4.300 h2.200 l-3.500 4 l-3.500 -4 h2.200 z M329 975.2 h7 v1.600 h-7z" fill="#000"/><g transform="translate(343.5,960)"><path d="M1 0 V22 M21 0 V22" stroke="#ff0000" stroke-width="1.100" fill="none"/><path d="M1 1.500 l2.400 1.300 l-2.400 1.300 z M21.500 20.500 l-2.800 -2.400 h2.800 z" fill="#ff0000"/><text x="5.300" y="9.700" font-size="9" fill="#000" textLength="12" lengthAdjust="spacingAndGlyphs">2D</text><text x="5.300" y="18.300" font-size="9" fill="#000" textLength="12" lengthAdjust="spacingAndGlyphs">3D</text></g><g transform="translate(372,960)"><rect x="0.500" y="0" width="22.500" height="21.500" fill="#c0c0c0"/><path d="M1 8 V15.500 C1 23 22 23 22 15.500 V8 Z" fill="#0e8a8a" stroke="#000" stroke-width="0.800"/><path d="M3.500 19.500 C7 22.300 15.500 22.300 19.500 19.500" stroke="#000" stroke-width="1.500" fill="none"/><ellipse cx="11.500" cy="8.300" rx="9.300" ry="7" fill="#fff" stroke="#000" stroke-width="1.200"/><rect x="9.300" y="0" width="4.500" height="1.300" fill="#000"/><ellipse cx="11.300" cy="7.500" rx="4" ry="3" fill="#000090"/><path d="M11 7.500 L19.500 3.800 L20.800 8.500 L14 9.500 Z" fill="#000090"/><path d="M16.500 8.500 L20.600 8 L19.500 11.500 Z" fill="#fff"/><path d="M4 12 C6.500 14.500 9 15 12 14.500" stroke="#0e8a8a" stroke-width="1" fill="none"/></g><path d="M403.500 963.500 L418 976.500" stroke="#000" stroke-width="1"/><path d="M419 975 l3 2.500 l-3 2.500z" fill="#000"/><rect x="431" y="960" width="22" height="22" fill="#128484"/><path d="M436 978 L441.500 964 M443 978 L448.500 964 M440 972 l2 -2 l1.500 3 l2 -2" stroke="#fff" stroke-width="1" fill="none"/><ellipse cx="469.500" cy="969.500" rx="6.500" ry="5.500" stroke="#000" stroke-width="1" fill="none"/><path d="M477 975 l3 2.500 l-3 2.500z" fill="#000"/><rect x="489" y="960" width="22" height="22" fill="#128484"/><circle cx="500" cy="971" r="8" stroke="#fff" stroke-width="1" fill="none"/><path d="M492 971 H508 M498 969 l2 2 l-2 2 M502 969 l-2 2 l2 2" stroke="#fff" stroke-width="0.900" fill="none"/>
<g transform="translate(537,962)"><path d="M4.500 12.500 L10.500 6.500" stroke="#008000" stroke-width="2.800"/><path d="M7.300 4 H13.200 V9.800 Z" fill="#008000"/><path d="M2.500 15.800 V3" stroke="#0000ff" stroke-width="3"/><path d="M2.500 -0.300 L6.100 3.800 H-1.100 Z" fill="#0000ff"/><path d="M1 14.400 H13.500" stroke="#ff0000" stroke-width="3"/><path d="M16.900 14.300 L12.800 10.800 V17.800 Z" fill="#ff0000"/></g><path d="M565.2 966 h2.600 v4.300 h2.200 l-3.500 4 l-3.500 -4 h2.200 z M563 975.2 h7 v1.600 h-7z" fill="#000"/><g transform="translate(578,960)"><rect x="0" y="0" width="22" height="22" fill="#4a5ce6"/><text x="3.500" y="6.700" font-size="9.500" font-weight="bold" fill="#f0f000" textLength="12" lengthAdjust="spacingAndGlyphs">pc</text><path d="M7.500 10.300 h5 M7.500 12.800 h5" stroke="#fff" stroke-width="1.400"/><text x="0.800" y="20.700" font-size="10.500" font-weight="bold" fill="#fff" textLength="20.400" lengthAdjust="spacingAndGlyphs">vue</text></g><g transform="translate(607,962)"><path d="M4.500 12.500 L10.500 6.500" stroke="#008000" stroke-width="2.800"/><path d="M7.300 4 H13.200 V9.800 Z" fill="#008000"/><path d="M2.500 15.800 V3" stroke="#0000ff" stroke-width="3"/><path d="M2.500 -0.300 L6.100 3.800 H-1.100 Z" fill="#0000ff"/><path d="M1 14.400 H13.500" stroke="#ff0000" stroke-width="3"/><path d="M16.900 14.300 L12.800 10.800 V17.800 Z" fill="#ff0000"/><text x="15" y="6.600" font-size="9" fill="#000">C</text></g><path d="M637.2 966 h2.600 v4.300 h2.200 l-3.500 4 l-3.500 -4 h2.200 z M635 975.2 h7 v1.600 h-7z" fill="#000"/><g transform="translate(649.500,960)"><path d="M1 0 V22 M21 0 V22" stroke="#ff0000" stroke-width="1.100" fill="none"/><path d="M1 1.500 l2.400 1.300 l-2.400 1.300 z M21.500 20.500 l-2.800 -2.400 h2.800 z" fill="#ff0000"/><circle cx="11" cy="11" r="8.500" fill="#f0e800" stroke="#000" stroke-width="1.200"/><path d="M11 2.500 V19.500 M2.500 11 H19.500 M4 6.500 H18 M4 15.500 H18" stroke="#000" stroke-width="1.100"/><ellipse cx="11" cy="11" rx="4.500" ry="8.500" fill="none" stroke="#000" stroke-width="1.100"/></g><g transform="translate(678.5,960)"><path d="M1 0 V22 M21 0 V22" stroke="#ff0000" stroke-width="1.100" fill="none"/><path d="M1 1.500 l2.400 1.300 l-2.400 1.300 z M21.500 20.500 l-2.800 -2.400 h2.800 z" fill="#ff0000"/><text x="5.300" y="9.700" font-size="9" fill="#000" textLength="12" lengthAdjust="spacingAndGlyphs">2D</text><text x="5.300" y="18.300" font-size="9" fill="#000" textLength="12" lengthAdjust="spacingAndGlyphs">3D</text></g><g transform="translate(709,962)"><path d="M4.500 12.500 L10.500 6.500" stroke="#008000" stroke-width="2.800"/><path d="M7.300 4 H13.200 V9.800 Z" fill="#008000"/><path d="M2.500 15.800 V3" stroke="#0000ff" stroke-width="3"/><path d="M2.500 -0.300 L6.100 3.800 H-1.100 Z" fill="#0000ff"/><path d="M1 14.400 H13.500" stroke="#ff0000" stroke-width="3"/><path d="M16.900 14.300 L12.800 10.800 V17.800 Z" fill="#ff0000"/><text x="15" y="6.600" font-size="9" fill="#000">Z</text></g>
</g>
</svg>
</body>
</html>
